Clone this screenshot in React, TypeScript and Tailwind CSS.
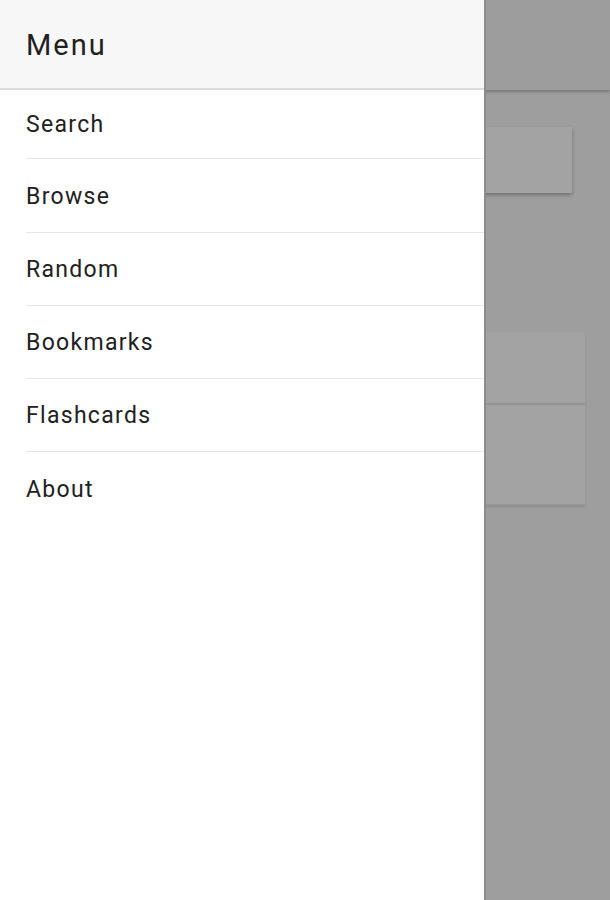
import React from 'react';

const items = ['Search', 'Browse', 'Random', 'Bookmarks', 'Flashcards', 'About'];

const App: React.FC = () => {
  return (
    <div className="relative w-[610px] h-[900px] overflow-hidden bg-[#f8f8f8] font-['Roboto',sans-serif]">
      {/* page behind the drawer */}
      <div className="flex flex-col h-full">
        <div className="h-[90px] bg-[#f6f6f6] shadow-[0_2px_3px_rgba(0,0,0,0.25)]" />
        <div className="flex flex-col px-[24px] pt-[37px]">
          <div className="h-[66px] w-[548px] bg-white shadow-[0_2px_4px_rgba(0,0,0,0.3)]" />
          <div className="mt-[139px] w-[561px] flex flex-col shadow-[0_1px_2px_rgba(0,0,0,0.12)]">
            <div className="h-[73px] bg-white border-b-2 border-[#e8e8e8]" />
            <div className="h-[101px] bg-white border-b-2 border-[#e8e8e8]" />
          </div>
        </div>
      </div>

      {/* scrim */}
      <div className="absolute inset-0 bg-black opacity-[0.36]" />

      {/* drawer */}
      <div className="absolute left-0 top-0 bottom-0 w-[486px] bg-white flex flex-col border-r-2 border-[#8c8c8c]">
        <div className="h-[90px] flex items-center pt-[2px] px-[26px] bg-[#f7f7f7] border-b-2 border-[#dcdcdc]">
          <span className="text-[29px] tracking-[2px] text-[#212121] leading-none">Menu</span>
        </div>
        <div className="flex flex-col">
          {items.map((label, i) => (
            <div
              key={label}
              className={
                'ml-[26px] flex items-center pt-[3px] text-[23px] tracking-[1.3px] text-[#212121] ' +
                (i === 0 ? 'h-[69px] ' : i === 1 ? 'h-[74px] ' : 'h-[73px] ') +
                (i < items.length - 1 ? 'border-b border-[#e6e6e6]' : '')
              }
            >
              {label}
            </div>
          ))}
        </div>
      </div>
    </div>
  );
};

export default App;
